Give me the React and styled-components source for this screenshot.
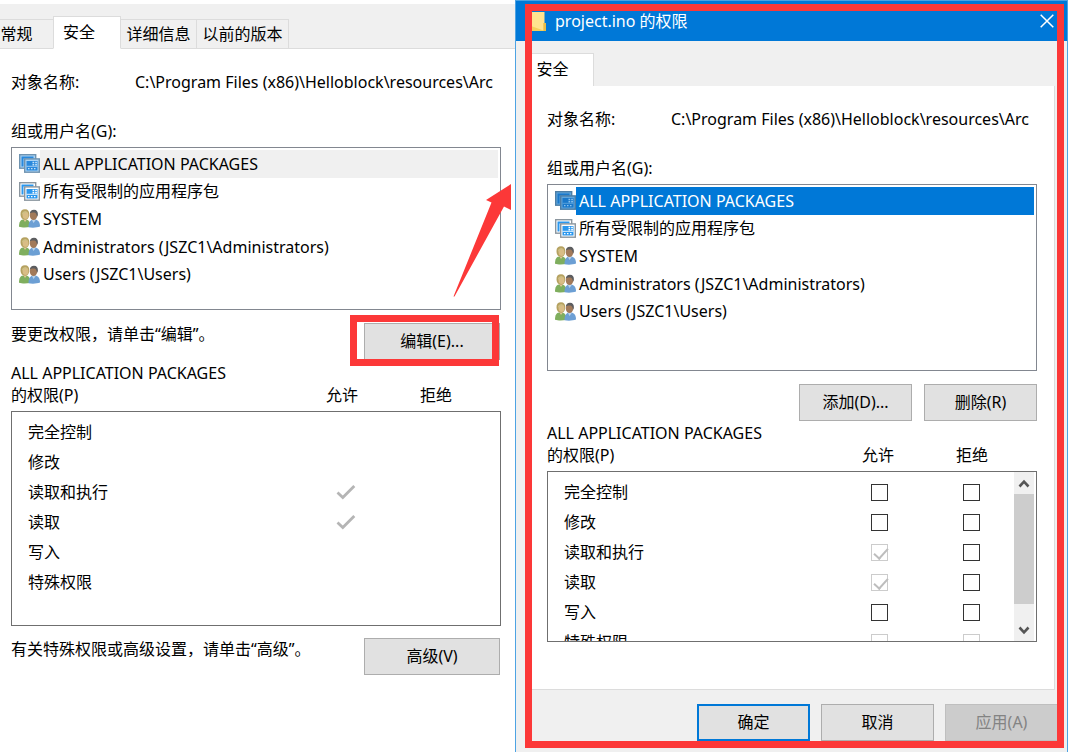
import styled, { createGlobalStyle } from "styled-components";
import { useState } from "react";

const PATH = "C:\\Program Files (x86)\\Helloblock\\resources\\Arc";

const principals = [
  { name: "ALL APPLICATION PACKAGES", kind: "package" },
  { name: "所有受限制的应用程序包", kind: "package" },
  { name: "SYSTEM", kind: "users" },
  { name: "Administrators (JSZC1\\Administrators)", kind: "users" },
  { name: "Users (JSZC1\\Users)", kind: "users" },
];

const permissions = [
  { name: "完全控制" },
  { name: "修改" },
  { name: "读取和执行", inherited: true },
  { name: "读取", inherited: true },
  { name: "写入" },
  { name: "特殊权限", locked: true },
];

const packageTones = {
  plain: { paper: "#fff", edge: "#8b969f", ink: "#2a97ee", glyph: "#fff" },
  selected: { paper: "#a9d3f5", edge: "#6f93b0", ink: "#2888dc", glyph: "#c4e2f9" },
  active: { paper: "#5ea5dd", edge: "#4d7ea6", ink: "#1a78ca", glyph: "#8ec4ee" },
};

const PackageIcon = ({ tone }) => {
  const { paper, edge, ink, glyph } = packageTones[tone];
  return (
    <Icon viewBox="0 0 21 19" aria-hidden="true">
      <rect x="0.700" y="0.700" width="16" height="13.500" fill={paper} stroke={edge} strokeWidth="1.400" />
      <path d="M2.500 2.500h12v2h-10v8h-2z" fill={ink} />
      <rect x="5.700" y="4.900" width="14.600" height="13.300" fill={paper} stroke={edge} strokeWidth="1.400" />
      <rect x="7.500" y="7" width="11" height="9.500" fill={ink} />
      <path d="M13.500 7.800h1.700v1.400h-1.700zM16.200 7.800h1.700v1.400h-1.700zM13.500 10h1.700v1.400h-1.700zM16.200 10h1.700v1.400h-1.700z" fill={glyph} />
      <path d="M7.500 12.300h11" stroke={paper} strokeWidth="0.900" />
      <path d="M9 14.700h1.500M12 14.700h1.500M15 14.700h1.500" stroke={glyph} strokeWidth="1.300" />
    </Icon>
  );
};

const UsersIcon = () => (
  <Icon viewBox="0 0 21 19" aria-hidden="true">
    <path d="M0 17.800C0 13 1.500 10.300 5.500 10.300S11.500 13 11.500 17.800C8 18.800 3 18.800 0 17.800z" fill="#7fae5e" />
    <path d="M4 9.500l2 3.500 2.500-3.500z" fill="#e6c79c" />
    <path d="M1.500 5.500C1.300 2 3 .3 6 .3s4.500 2 4.200 5.200c-.1 3-1.200 5-3.700 5.200C3.300 11 1.600 8.800 1.500 5.500z" fill="#b5a160" />
    <ellipse cx="6.500" cy="6.200" rx="2.900" ry="3.800" fill="#d9bd86" />
    <path d="M3 4.500C4 1.800 7 1.500 9.300 3.800 7.300 3.300 5 3.800 3 6z" fill="#cdbf85" />
    <path d="M9.500 18.300C9.500 13.500 11 10.600 15 10.600s6 2.400 6 7c-3 1.300-8.500 1.400-11.500.7z" fill="#6c9fd4" />
    <path d="M12.500 10l2 4 3-4z" fill="#b9d3ec" />
    <ellipse cx="14.500" cy="6.200" rx="3.700" ry="4.900" fill="#a27a5a" />
    <path d="M10.800 4.500C11 2 12.600.7 15 .7c2.800 0 4.200 2 3.900 5.200l-.9 2C17.800 5.500 17 3.800 15.500 3.500c-2-.2-3.300-.1-4.700 1z" fill="#5c5d60" />
  </Icon>
);

const CheckMark = () => (
  <svg width="20" height="16" viewBox="0 0 20 16" role="img" aria-label="允许">
    <path d="M1.500 8.500l5.300 5L18.300 2" fill="none" stroke="#b5b5b5" strokeWidth="2.800" />
  </svg>
);

const Chevron = ({ down }) => (
  <svg width="12" height="9" viewBox="0 0 12 9" aria-hidden="true">
    <path d={down ? "M1.500 1.500L6 6.300l4.500-4.800" : "M1.500 7.500L6 2.700l4.500 4.800"} fill="none" stroke="#555" strokeWidth="2.600" />
  </svg>
);

const Principals = ({ id, active, height }) => {
  const [selected, setSelected] = useState(0);
  const selectedTone = active ? "active" : "selected";
  return (
    <>
      <Label id={id}>组或用户名(G):</Label>
      <ListBox role="listbox" aria-labelledby={id} $height={height}>
        {principals.map(({ name, kind }, i) => (
          <Principal key={name} role="option" aria-selected={i === selected} onClick={() => setSelected(i)}>
            {kind === "package" ? <PackageIcon tone={i === selected ? selectedTone : "plain"} /> : <UsersIcon />}
            <PrincipalName $selected={i === selected} $active={active}>
              {name}
            </PrincipalName>
          </Principal>
        ))}
      </ListBox>
    </>
  );
};

const ObjectName = ({ id }) => (
  <ObjectRow>
    <label htmlFor={id}>对象名称:</label>
    <PathInput id={id} value={PATH} readOnly />
  </ObjectRow>
);

const PermissionHeader = () => (
  <HeaderRow>
    <span>
      ALL APPLICATION PACKAGES
      <br />
      的权限(P)
    </span>
    <ColumnTitle>允许</ColumnTitle>
    <ColumnTitle>拒绝</ColumnTitle>
  </HeaderRow>
);

const Properties = () => (
  <PropertiesPane>
    <TabStrip>
      <Tab $width={53}>常规</Tab>
      <Tab $width={68} $active>
        安全
      </Tab>
      <Tab $width={76}>详细信息</Tab>
      <Tab $width={92}>以前的版本</Tab>
    </TabStrip>
    <PropertiesBody>
      <ObjectName id="properties-path" />
      <Principals id="properties-groups" height={163} />
      <NoteRow>
        <span>要更改权限，请单击“编辑”。</span>
        <Highlighted>
          <Button $width={136}>编辑(E)...</Button>
          <ButtonRing />
        </Highlighted>
      </NoteRow>
      <PermissionHeader />
      <PermissionBox $height={215}>
        <PermissionTable>
          <tbody>
            {permissions.map(({ name, inherited }) => (
              <tr key={name}>
                <NameCell scope="row">{name}</NameCell>
                <MarkCell $width={94}>{inherited && <CheckMark />}</MarkCell>
                <MarkCell $width={105} />
              </tr>
            ))}
          </tbody>
        </PermissionTable>
      </PermissionBox>
      <AdvancedRow>
        <span>有关特殊权限或高级设置，请单击“高级”。</span>
        <Button $width={136}>高级(V)</Button>
      </AdvancedRow>
    </PropertiesBody>
    <Arrow viewBox="0 0 60 115" aria-hidden="true">
      <path d="M0.500 112.500L38.500 18.500 33 16 58 0V26L51 22.500 1.500 112.500z" fill="#fc3838" />
    </Arrow>
  </PropertiesPane>
);

const PermissionDialog = () => (
  <Dialog role="dialog" aria-labelledby="dialog-title">
    <TitleBar>
      <svg width="16" height="21" viewBox="0 0 16 21" aria-hidden="true">
        <path d="M0 1h13.500v11l1.500 1v7H0z" fill="#ffe38f" />
        <path d="M0 15l12.500 4.500V12h2.500v8H0z" fill="#f5ce5b" />
        <path d="M12.500 12H15v8h-2.500z" fill="#e9bd45" />
      </svg>
      <Title id="dialog-title">project.ino 的权限</Title>
      <CloseButton aria-label="关闭">
        <svg width="14" height="14" viewBox="0 0 14 14" aria-hidden="true">
          <path d="M0.700 0.700l12.600 12.600M13.300 0.700L0.700 13.300" stroke="#fff" strokeWidth="1.500" />
        </svg>
      </CloseButton>
    </TitleBar>
    <DialogTabs>
      <DialogTab>安全</DialogTab>
    </DialogTabs>
    <DialogBody>
      <ObjectName id="dialog-path" />
      <Principals id="dialog-groups" height={187} active />
      <EditRow>
        <Button $width={113}>添加(D)...</Button>
        <Button $width={113}>删除(R)</Button>
      </EditRow>
      <PermissionHeader />
      <PermissionBox $height={171}>
        <PermissionTable>
          <tbody>
            {permissions.map(({ name, inherited, locked }) => (
              <tr key={name}>
                <NameCell scope="row">{name}</NameCell>
                <MarkCell $width={98}>
                  <Checkbox
                    type="checkbox"
                    aria-label={`允许 ${name}`}
                    defaultChecked={inherited}
                    disabled={inherited || locked}
                  />
                </MarkCell>
                <MarkCell $width={86}>
                  <Checkbox type="checkbox" aria-label={`拒绝 ${name}`} disabled={locked} />
                </MarkCell>
              </tr>
            ))}
          </tbody>
        </PermissionTable>
        <ScrollBar>
          <ScrollButton aria-label="向上滚动">
            <Chevron />
          </ScrollButton>
          <ScrollThumb />
          <ScrollButton aria-label="向下滚动">
            <Chevron down />
          </ScrollButton>
        </ScrollBar>
      </PermissionBox>
    </DialogBody>
    <DialogFooter>
      <Button $width={113} $primary>
        确定
      </Button>
      <Button $width={113}>取消</Button>
      <Button $width={113} disabled>
        应用(A)
      </Button>
    </DialogFooter>
    <DialogRing />
  </Dialog>
);

const App = () => (
  <>
    <GlobalStyle />
    <Page>
      <Properties />
      <PermissionDialog />
    </Page>
  </>
);

export default App;

/* ---------------------------- Styled Components --------------------------- */

const GlobalStyle = createGlobalStyle`
  * {
    box-sizing: border-box;
  }

  body {
    margin: 0;
    background: #fff;
    color: #000;
  }

  body, button, input {
    font-family: "Noto Sans", "Noto Sans CJK SC", sans-serif;
    font-size: 16px;
    line-height: 22px;
  }
`;

const Page = styled.main`
  display: grid;
  grid-template-columns: 515fr 554fr;
  min-height: 100vh;
  overflow: hidden;
`;

const PropertiesPane = styled.section`
  position: relative;
  min-width: 0;
  padding-top: 4px;
`;

const TabStrip = styled.div`
  height: 45px;
  display: flex;
  align-items: flex-end;
  background: #f0f0f0;
  box-shadow: inset 0 -1px #dcdcdc;
`;

const Tab = styled.button`
  width: ${props => props.$width}px;
  height: ${props => (props.$active ? 33 : 30)}px;
  padding: ${props => (props.$active ? "0 16px 2px 0" : "0")};
  border: 1px solid #dcdcdc;
  border-left-width: ${props => (props.$active ? 1 : 0)}px;
  border-bottom-color: ${props => (props.$active ? "#fff" : "#dcdcdc")};
  background: ${props => (props.$active ? "#fff" : "#f0f0f0")};
  white-space: nowrap;

  &:first-child {
    padding-right: 20px;
    border-right: none;
  }
`;

const PropertiesBody = styled.div`
  padding: 22px 14px 0 11px;
`;

const ObjectRow = styled.div`
  display: grid;
  grid-template-columns: 124px minmax(0, 1fr);
  margin-bottom: 27px;
`;

const PathInput = styled.input`
  width: 100%;
  height: 22px;
  padding: 0;
  border: none;
  outline: none;
  background: transparent;
`;

const Label = styled.div`
  margin-bottom: 5px;
`;

const ListBox = styled.ul`
  height: ${props => props.$height}px;
  margin: 0 0 13px;
  padding: 2px 2px ${props => props.$height - 142}px 7px;
  border: 1px solid #828790;
  list-style: none;
  display: grid;
  grid-template-rows: repeat(5, 1fr);
`;

const Principal = styled.li`
  display: flex;
  align-items: center;
`;

const PrincipalName = styled.span`
  flex: 1;
  align-self: stretch;
  display: flex;
  align-items: center;
  padding-left: 3px;
  white-space: nowrap;
  color: ${props => (props.$selected && props.$active ? "#fff" : "#000")};
  background: ${props => (props.$selected ? (props.$active ? "#0078d7" : "#f0f0f0") : "transparent")};
`;

const Icon = styled.svg`
  width: 21px;
  height: 19px;
  flex: none;
`;

const NoteRow = styled.div`
  display: flex;
  justify-content: space-between;
  align-items: flex-start;
  margin-bottom: 2px;
  padding-right: 1px;
  white-space: nowrap;
`;

const AdvancedRow = styled(NoteRow)`
  margin-top: 12px;
`;

const Highlighted = styled.div`
  position: relative;
`;

const ButtonRing = styled.div`
  position: absolute;
  inset: -8px 1px -6px -14px;
  border: 7px solid #fc3838;
  pointer-events: none;
`;

const Button = styled.button`
  display: block;
  width: ${props => props.$width}px;
  height: 37px;
  padding: 0 0 2px;
  color: #000;
  background: #e1e1e1;
  border: ${props => (props.$primary ? "2px solid #0078d7" : "1px solid #adadad")};

  &:disabled {
    color: #838383;
    background: #ccc;
    border-color: #bfbfbf;
  }
`;

const HeaderRow = styled.div`
  display: grid;
  grid-template-columns: 1fr 94px 94px;
  align-items: end;
  padding-right: 18px;
  margin-bottom: 5px;
`;

const ColumnTitle = styled.span`
  text-align: center;
`;

const PermissionBox = styled.div`
  height: ${props => props.$height}px;
  display: flex;
  align-items: flex-start;
  overflow: hidden;
  padding-right: 2px;
  border: 1px solid #6f6f6f;
`;

const PermissionTable = styled.table`
  flex: 1;
  margin-top: 5px;
  border-collapse: collapse;
  table-layout: fixed;

  tr {
    height: 30px;
  }
`;

const NameCell = styled.th`
  padding: 0 0 0 16px;
  font-weight: 400;
  text-align: left;
`;

const MarkCell = styled.td`
  width: ${props => props.$width}px;
  padding: 0;
  text-align: center;

  svg, input {
    display: block;
    margin: 0 auto;
  }
`;

const Checkbox = styled.input`
  appearance: none;
  width: 17px;
  height: 17px;
  border: 1px solid #333;
  background: #fff;

  &:disabled {
    border-color: #ccc;
  }

  &:checked::after {
    content: "";
    display: block;
    width: 6px;
    height: 12px;
    margin: 0 0 0 5px;
    border: solid #bdbdbd;
    border-width: 0 2px 2px 0;
    transform: rotate(42deg);
  }
`;

const ScrollBar = styled.div`
  width: 20px;
  height: 100%;
  display: flex;
  flex-direction: column;
  background: #f0f0f0;
`;

const ScrollButton = styled.button`
  height: 22px;
  padding: 0;
  border: none;
  background: #f0f0f0;
  display: grid;
  place-items: center;
`;

const ScrollThumb = styled.div`
  height: 110px;
  margin-bottom: auto;
  background: #cdcdcd;
`;

const Arrow = styled.svg`
  position: absolute;
  top: 184px;
  right: 2px;
  width: 60px;
  height: 115px;
`;

const Dialog = styled.section`
  position: relative;
  min-width: 0;
  margin-right: 1px;
  border: solid #4da3e3;
  border-width: 1px 1px 0;
  background: #f0f0f0;
  display: flex;
  flex-direction: column;
`;

const TitleBar = styled.header`
  height: 40px;
  padding: 0 13px 0 15px;
  display: flex;
  align-items: center;
  color: #fff;
  background: #0078d7;
`;

const Title = styled.span`
  flex: 1;
  margin-left: 8px;
`;

const CloseButton = styled.button`
  padding: 0;
  border: none;
  background: none;
  display: flex;
`;

const DialogTabs = styled.div`
  height: 45px;
  padding-left: 9px;
  display: flex;
  align-items: flex-end;
`;

const DialogTab = styled.button`
  width: 69px;
  height: 33px;
  padding: 0 14px 2px 0;
  border: 1px solid #dcdcdc;
  border-bottom: none;
  background: #fff;
`;

const DialogBody = styled.div`
  margin: 0 12px 0 10px;
  padding: 22px 17px 47px 21px;
  background: #fff;
  border: solid #dcdcdc;
  border-width: 0 1px 1px 0;
`;

const EditRow = styled.div`
  display: flex;
  justify-content: flex-end;
  gap: 12px;
  margin-bottom: 1px;
`;

const DialogFooter = styled.footer`
  display: flex;
  justify-content: flex-end;
  gap: 11px;
  padding: 14px 9px 11px;
`;

const DialogRing = styled.div`
  position: absolute;
  inset: 3px 3px 4px 9px;
  border: 7px solid #fc3838;
  pointer-events: none;
`;
